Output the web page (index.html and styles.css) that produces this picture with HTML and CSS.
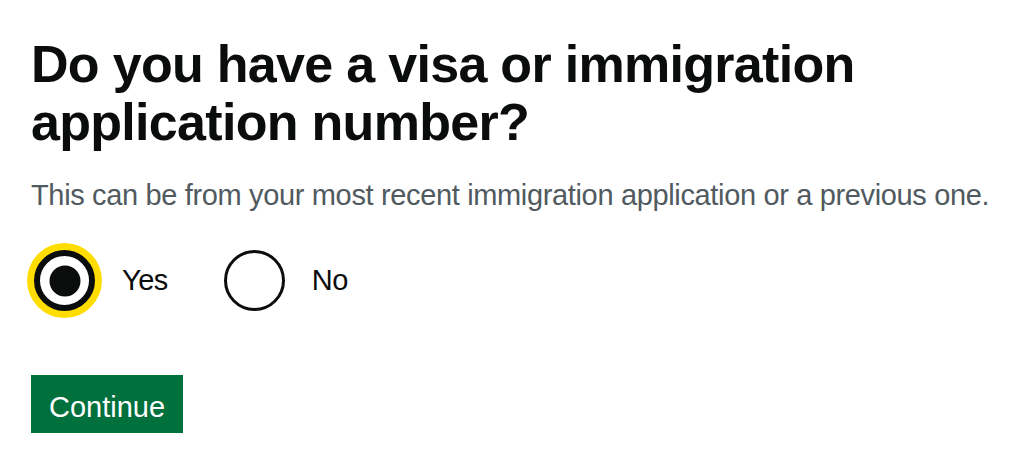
FILE: index.html
```html
<!DOCTYPE html>
<html lang="en">
<head>
  <meta charset="UTF-8" />
  <meta name="viewport" content="width=device-width, initial-scale=1.0"/>
  <title>Visa or immigration application number</title>
  <link rel="stylesheet" href="styles.css">
</head>
<body>
  <main class="page">
    <form class="question-form" action="#" method="post">
      <fieldset class="fieldset">
        <legend class="question-heading">Do you have a visa or immigration application number?</legend>

        <p class="hint">This can be from your most recent immigration application or a previous one.</p>

        <!-- Yes / No choice -->
        <div class="radios">
          <div class="radio-item">
            <input class="radio-input is-focused" id="has-number-yes" name="hasNumber" type="radio" value="yes" checked>
            <label class="radio-label" for="has-number-yes">Yes</label>
          </div>
          <div class="radio-item">
            <input class="radio-input" id="has-number-no" name="hasNumber" type="radio" value="no">
            <label class="radio-label" for="has-number-no">No</label>
          </div>
        </div>
      </fieldset>

      <button class="button" type="submit">Continue</button>
    </form>
  </main>
</body>
</html>
```

FILE: styles.css
```css
body {
  margin: 0;
  padding: 0;
  background: #ffffff;
  color: #0b0c0c;
  font-family: "Liberation Sans", Arial, sans-serif;
}

.page {
  padding: 35px 30px 0 31px;
}

.fieldset {
  margin: 0;
  padding: 0;
  border: 0;
  min-width: 0;
}

.question-heading {
  display: block;
  padding: 0;
  max-width: 900px;
  font-size: 52px;
  line-height: 58px;
  font-weight: 700;
  letter-spacing: -0.7px;
  color: #0b0c0c;
}

.hint {
  margin: 25px 0 0 0;
  font-size: 29px;
  line-height: 38px;
  letter-spacing: -0.35px;
  color: #505a5f;
}

.radios {
  display: flex;
  align-items: center;
  margin-top: 36px;
}

.radio-item {
  display: flex;
  align-items: center;
  margin-right: 31px;
}

.radio-input {
  appearance: none;
  -webkit-appearance: none;
  position: relative;
  box-sizing: border-box;
  width: 61px;
  height: 61px;
  margin: 0 0 0 3px;
  border: 3px solid #0b0c0c;
  border-radius: 50%;
  background: #ffffff;
  cursor: pointer;
}

.radio-input:checked {
  border-width: 6px;
}

.radio-input:checked::after {
  content: "";
  position: absolute;
  top: 50%;
  left: 50%;
  width: 31px;
  height: 31px;
  border-radius: 50%;
  background: #0b0c0c;
  transform: translate(-50%, -50%);
}

.radio-input:focus,
.radio-input.is-focused {
  outline: none;
  box-shadow: 0 0 0 7px #ffdd00;
}

.radio-label {
  padding: 12px 22px 12px 27px;
  font-size: 29px;
  line-height: 37px;
  letter-spacing: -0.5px;
  cursor: pointer;
}

.button {
  display: inline-block;
  box-sizing: border-box;
  height: 58px;
  margin-top: 64px;
  padding: 6px 18px 0 18px;
  border: 0;
  border-radius: 0;
  background-color: #00703c;
  box-shadow: 0 3px 0 #002d18;
  color: #ffffff;
  font-family: "Liberation Sans", Arial, sans-serif;
  font-size: 29px;
  line-height: 52px;
  cursor: pointer;
}

.button:hover {
  background-color: #005a30;
}
```
